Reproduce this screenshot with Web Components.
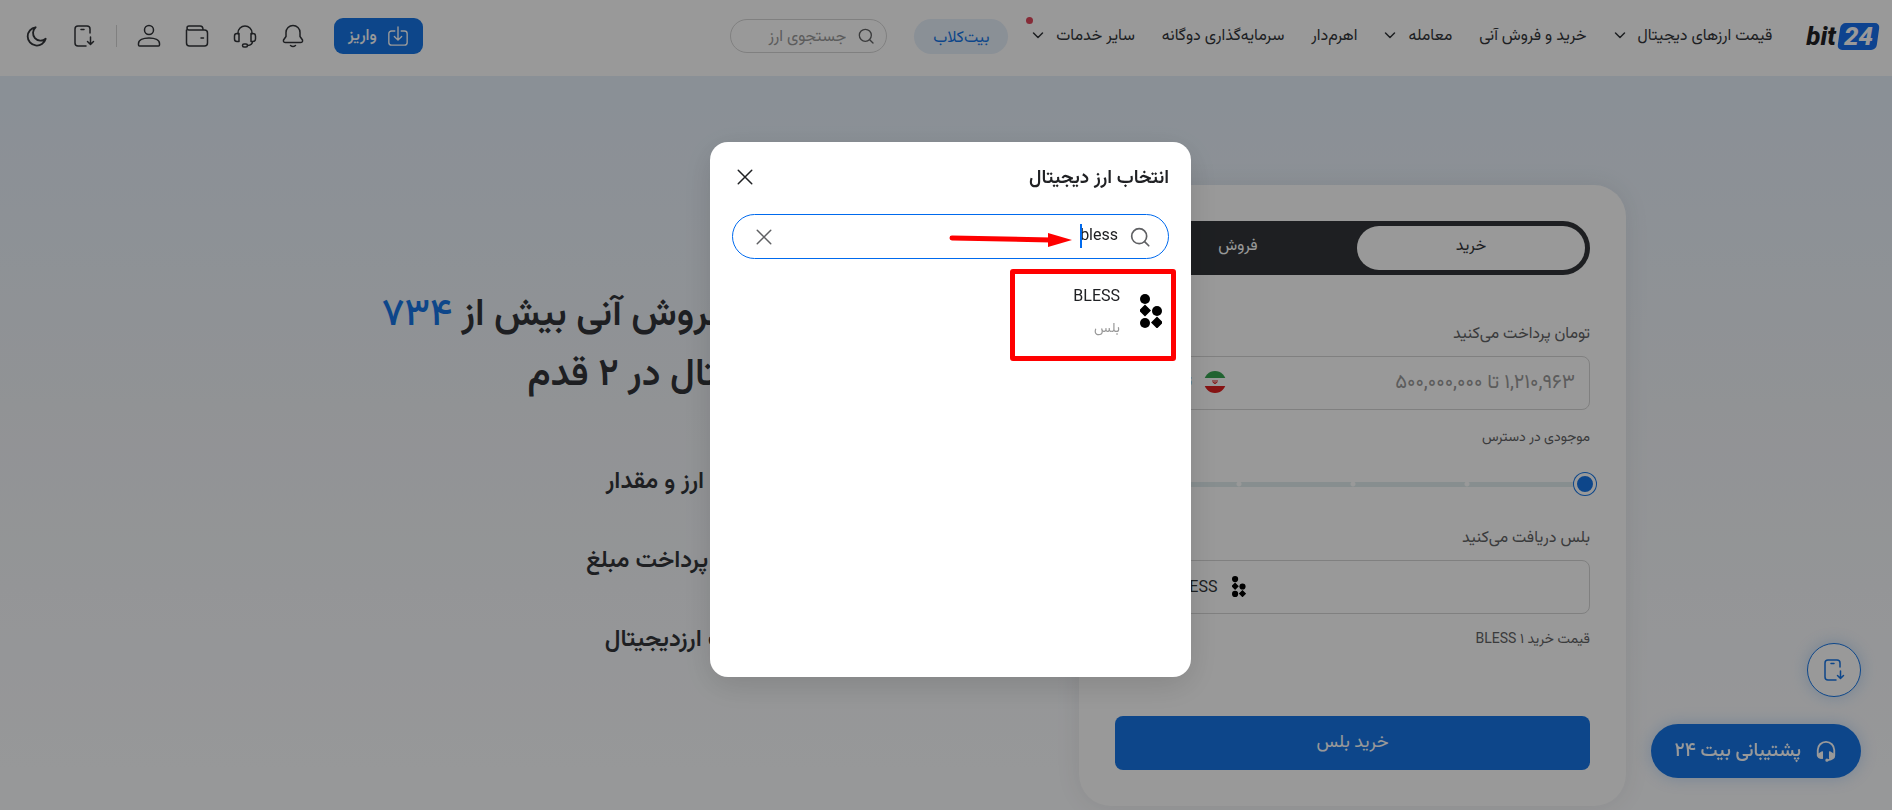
<!DOCTYPE html>
<html lang="fa" dir="rtl">
<head>
	<meta charset="utf-8">
	<meta name="viewport" content="width=device-width, initial-scale=1">
	<title>bit24</title>
	<style>
		:root {
			--blue: #1776e6;
			--ink: #323539;
			--muted: #626365;
			--line: #d6d6d6;
		}
		body {
			margin: 0;
			min-height: 100vh;
			font-family: Roboto, Vazirmatn, "DejaVu Sans", sans-serif;
			font-size: 16px;
			color: var(--ink);
			background: linear-gradient(#e6f0fb 76px, #f2f5f9 50%, #fcfdff 95%) no-repeat;
			overflow: hidden;
		}
	</style>
</head>
<body>
	<app-header></app-header>
	<buy-page></buy-page>
	<float-actions></float-actions>
	<coin-dialog heading="انتخاب ارز دیجیتال">
		<coin-option symbol="BLESS">بلس</coin-option>
	</coin-dialog>

	<script>
		const icons = {
			moon: '<path d="M21.500 15A10 10 0 1 1 10.500 2.500a8 8 0 0 0 11 12.500Z"/>',
			phone: '<path d="M18 9V5a3 3 0 0 0-3-3H6a3 3 0 0 0-3 3v14a3 3 0 0 0 3 3h8M9 5.500h3M18.500 13v7M15.500 17.500l3 3 3-3"/>',
			user: '<circle cx="12" cy="6" r="4.500"/><path d="M1.500 21v-1.500C1.500 16 6 14 12 14s10.500 2 10.500 5.500V21q0 1-1 1h-19q-1 0-1-1Z"/>',
			wallet: '<path d="M1.500 6v13a3 3 0 0 0 3 3h15a3 3 0 0 0 3-3V9a3 3 0 0 0-3-3H4a2 2 0 0 1 0-4h11q3 0 3 3.500M16 14h2.500"/>',
			headset: '<path d="M5 10V9a7 7 0 0 1 14 0v1M6 9.500H4A2.500 2.500 0 0 0 1.500 12v3A2.500 2.500 0 0 0 4 17.500h2ZM18 9.500h2a2.500 2.500 0 0 1 2.500 2.500v3a2.500 2.500 0 0 1-2.500 2.500h-2ZM19.500 17.500q0 3.500-5 4"/><rect x="9.500" y="20" width="5" height="3" rx="1.500"/>',
			bell: '<path d="M12 1.500a7 7 0 0 0-7 7v4L2.500 16Q2 18.500 4.500 18.500h15q2.500 0 2-2.500L19 12.500v-4a7 7 0 0 0-7-7ZM9.500 21.500q2.500 2 5 0"/>',
			deposit: '<path d="M8.500 6.500H5a3 3 0 0 0-3 3V19a3 3 0 0 0 3 3h14a3 3 0 0 0 3-3V9.500a3 3 0 0 0-3-3h-3.500M12 2V16M8 12.500l4 4 4-4"/>',
			search: '<circle cx="11" cy="11" r="9"/><path d="m17.500 17.500 5 5"/>',
			close: '<path d="M3 3l18 18M21 3 3 21"/>',
			chevron: '<path d="m3 8 9 9 9-9"/>',
			support: '<path d="M3 17V11a9 9 0 0 1 18 0v6q0 4-7 5" stroke-width="2"/><path d="M8 13v7q-5 0-5-4ZM16 13v7q5 0 5-4Z" fill="currentColor"/><circle cx="13" cy="22" r="1" fill="currentColor"/>'
		};

		function render(element, html) {
			const template = document.createElement('template');
			template.innerHTML = html;
			element.attachShadow({ mode: 'open' }).appendChild(template.content.cloneNode(true));
		}

		class UiIcon extends HTMLElement {
			connectedCallback() {
				const size = this.getAttribute('size') || 24;
				render(this, `
					<style>
						:host { display: inline-flex; flex: none; }
						svg { fill: none; stroke: currentColor; stroke-width: ${this.getAttribute('weight') || '1.500'}; stroke-linecap: round; stroke-linejoin: round; overflow: visible; }
					</style>
					<svg width="${size}" height="${size}" viewBox="0 0 24 24" aria-hidden="true">${icons[this.getAttribute('name')]}</svg>
				`);
			}
		}

		class BlessCoin extends HTMLElement {
			connectedCallback() {
				render(this, `
					<style>
						:host { display: inline-flex; flex: none; color: #000; }
						svg { height: var(--coin-size, 34px); fill: currentColor; }
					</style>
					<svg viewBox="0 0 22 34" aria-hidden="true">
						<circle cx="5" cy="5" r="5"/>
						<path d="m5 11 6 6-6 6-6-6ZM17 23l6 6-6 6-6-6Z" transform="translate(0 -.5)"/>
						<circle cx="17" cy="17" r="5"/>
						<circle cx="5" cy="29" r="5"/>
					</svg>
				`);
			}
		}

		class BrandLogo extends HTMLElement {
			connectedCallback() {
				render(this, `
					<style>
						:host { display: block; flex: none; }
						a { display: flex; align-items: center; direction: ltr; color: #202124; text-decoration: none; font: italic 800 26px/27px Roboto, sans-serif; }
						.badge { position: relative; z-index: 0; margin-inline-start: 2px; padding: 0 6px; color: #fff; }
						.badge::before { content: ""; position: absolute; z-index: -1; inset: 0 1px; background: #1870ef; border-radius: 5px; transform: skewX(-8deg); }
					</style>
					<a href="#"><span>bit</span><span class="badge">24</span></a>
				`);
			}
		}

		class NavItem extends HTMLElement {
			connectedCallback() {
				render(this, `
					<style>
						:host { display: block; position: relative; flex: none; }
						a { display: flex; align-items: center; gap: 12px; color: inherit; text-decoration: none; line-height: 24px; white-space: nowrap; }
						.dot { position: absolute; top: -6px; left: -6px; width: 7px; height: 7px; border-radius: 50%; background: #e0485c; }
					</style>
					<a href="#"><slot></slot>${this.hasAttribute('menu') ? '<ui-icon name="chevron" size="12" weight="3"></ui-icon>' : ''}</a>
					${this.hasAttribute('fresh') ? '<span class="dot"></span>' : ''}
				`);
			}
		}

		class AppHeader extends HTMLElement {
			connectedCallback() {
				render(this, `
					<style>
						:host { display: block; background: #fff; }
						header { display: flex; align-items: center; justify-content: space-between; box-sizing: border-box; height: 76px; padding: 0 13px 4px 26px; }
						.start, nav, .end { display: flex; align-items: center; }
						nav { gap: 27px; margin-inline: 34px 24px; padding-bottom: 2px; }
						.club { padding: 0 19px; line-height: 35px; border-radius: 18px; color: var(--blue); background: #e6f0fb; text-decoration: none; }
						.search { display: flex; align-items: center; gap: 12px; box-sizing: border-box; width: 157px; height: 34px; margin-inline-start: 27px; padding: 0 12px; border: 1px solid var(--line); border-radius: 17px; color: var(--muted); }
						input { flex: 1; min-width: 0; padding: 0 0 2px; border: 0; outline: 0; background: none; font: inherit; }
						input::placeholder { color: #999; opacity: 1; }
						button { display: inline-flex; padding: 0; border: 0; background: none; color: inherit; font: inherit; }
						.end { gap: 24px; }
						.deposit { align-items: center; gap: 10px; height: 36px; margin-inline-end: 5px; padding: 0 14px; border-radius: 9px; color: #fff; background: var(--blue); font-weight: 500; }
						hr { width: 1px; height: 22px; margin: 0 -4px; border: 0; background: var(--line); }
					</style>
					<header>
						<div class="start">
							<brand-logo></brand-logo>
							<nav>
								<nav-item menu>قیمت ارزهای دیجیتال</nav-item>
								<nav-item>خرید و فروش آنی</nav-item>
								<nav-item menu>معامله</nav-item>
								<nav-item>اهرم‌دار</nav-item>
								<nav-item>سرمایه‌گذاری دوگانه</nav-item>
								<nav-item menu fresh>سایر خدمات</nav-item>
							</nav>
							<a class="club" href="#">بیت‌کلاب</a>
							<label class="search">
								<ui-icon name="search" size="16" weight="2"></ui-icon>
								<input type="text" placeholder="جستجوی ارز" aria-label="جستجوی ارز">
							</label>
						</div>
						<div class="end">
							<button class="deposit" type="button"><ui-icon name="deposit" size="22"></ui-icon>واریز</button>
							<button type="button" aria-label="اعلان‌ها"><ui-icon name="bell"></ui-icon></button>
							<button type="button" aria-label="پشتیبانی"><ui-icon name="headset"></ui-icon></button>
							<button type="button" aria-label="کیف پول"><ui-icon name="wallet"></ui-icon></button>
							<button type="button" aria-label="حساب کاربری"><ui-icon name="user"></ui-icon></button>
							<hr>
							<button type="button" aria-label="دریافت اپلیکیشن"><ui-icon name="phone"></ui-icon></button>
							<button type="button" aria-label="حالت شب"><ui-icon name="moon" size="22" weight="2"></ui-icon></button>
						</div>
					</header>
				`);
			}
		}

		class TradeCard extends HTMLElement {
			connectedCallback() {
				render(this, `
					<style>
						:host { display: block; box-sizing: border-box; flex: none; width: 547px; padding: 36px; border-radius: 32px; background: #fff; box-shadow: 0 0 24px #32353918; }
						.tabs { display: flex; gap: 5px; padding: 5px; border-radius: 27px; background: var(--ink); }
						.tabs button { width: 228px; height: 44px; padding: 0 0 4px; border: 0; border-radius: 22px; color: #fff; background: none; font: inherit; }
						.tabs .active { color: var(--ink); background: #fff; }
						.label { display: block; color: var(--muted); line-height: 24px; }
						.pay { margin-top: 46px; }
						.field { display: flex; align-items: center; box-sizing: border-box; height: 54px; margin-top: 11px; padding: 0 14px 2px 0; border: 1px solid var(--line); border-radius: 8px; }
						.field input { flex: 1; min-width: 0; padding: 0 0 2px; border: 0; outline: 0; background: none; font: inherit; font-size: 20px; }
						.field input::placeholder { color: #999; opacity: 1; }
						.coin { display: flex; align-items: center; gap: 15px; width: 130px; padding: 0; border: 0; background: none; font: inherit; color: inherit; --coin-size: 21px; }
						.toman { gap: 12px; width: 110px; }
						.small { font-size: 14px; color: var(--muted); line-height: 24px; }
						.balance { margin-top: 14px; }
						.slider { display: block; width: calc(100% + 12px); height: 28px; margin: 22px -6px 0; padding: 0; appearance: none; background: radial-gradient(circle, #fff 2px, transparent 3px) right 72px center / 114px 8px repeat-x, linear-gradient(#e1edef, #e1edef) center / calc(100% - 12px) 5px no-repeat; }
						.slider::-webkit-slider-thumb { appearance: none; box-sizing: border-box; width: 22px; height: 22px; border: 3px solid #fff; border-radius: 50%; background: var(--blue); box-shadow: 0 0 0 1px var(--blue); }
						.receive { margin-top: 27px; }
						.price { margin-top: 12px; }
						.buy { display: block; width: 100%; height: 54px; margin-top: 66px; padding: 0; border: 0; border-radius: 8px; color: #fff; background: var(--blue); font: inherit; font-size: 18px; }
					</style>
					<div class="tabs" role="tablist">
						<button class="active" type="button" role="tab">خرید</button>
						<button type="button" role="tab">فروش</button>
					</div>
					<label class="label pay" for="pay">تومان پرداخت می‌کنید</label>
					<div class="field">
						<input id="pay" type="text" placeholder="۱,۲۱۰,۹۶۳ تا ۵۰۰,۰۰۰,۰۰۰">
						<button class="coin toman" type="button">
							<svg width="22" height="22" viewBox="0 0 22 22" aria-hidden="true">
								<clipPath id="round"><circle cx="11" cy="11" r="11"/></clipPath>
								<g clip-path="url(#round)"><path fill="#fff" d="M0 0h22v22H0z"/><path fill="#38a653" d="M0 0h22v7H0z"/><path fill="#e02020" d="M0 15h22v7H0z"/></g>
								<path d="M11 9v4M9 9q-1 3 2 3.500 3-.5 2-3.500" fill="none" stroke="#e02020"/>
							</svg>
							تومان
						</button>
					</div>
					<div class="small balance">موجودی در دسترس</div>
					<input class="slider" type="range" min="0" max="100" value="0" aria-label="موجودی در دسترس">
					<label class="label receive" for="receive">بلس دریافت می‌کنید</label>
					<div class="field">
						<input id="receive" type="text">
						<button class="coin" type="button"><bless-coin></bless-coin>BLESS</button>
					</div>
					<div class="small price">قیمت خرید ۱ BLESS</div>
					<button class="buy" type="button">خرید بلس</button>
				`);
			}
		}

		class BuyPage extends HTMLElement {
			connectedCallback() {
				render(this, `
					<style>
						:host { display: block; }
						main { display: flex; align-items: flex-start; gap: 243px; padding: 109px 266px 4px; }
						.intro { flex: 1; padding-top: 97px; }
						h1 { margin: 0; font-size: 38px; font-weight: 600; line-height: 60px; }
						b { color: var(--blue); font-weight: 500; }
						ul { margin: 64px 0 0; padding: 0 60px 0 0; list-style: none; font-size: 24px; font-weight: 600; line-height: 28px; }
						li + li { margin-top: 51px; }
					</style>
					<main>
						<trade-card></trade-card>
						<section class="intro">
							<h1>خرید و فروش آنی بیش از <b>۷۳۴</b><br>ارز دیجیتال در ۲ قدم</h1>
							<ul>
								<li>انتخاب ارز و مقدار</li>
								<li>تایید و پرداخت مبلغ</li>
								<li>دریافت ارزدیجیتال</li>
							</ul>
						</section>
					</main>
				`);
			}
		}

		class FloatActions extends HTMLElement {
			connectedCallback() {
				render(this, `
					<style>
						:host { position: fixed; right: 31px; bottom: 32px; display: flex; flex-direction: column; align-items: flex-start; gap: 27px; }
						button { display: flex; align-items: center; justify-content: center; gap: 14px; height: 54px; border-radius: 27px; font: inherit; }
						.app { width: 54px; padding: 0; border: 1px solid var(--blue); color: var(--blue); background: #fff; box-shadow: 0 0 16px #1776e640; }
						.help { padding: 0 24px; border: 0; color: #fff; background: var(--blue); font-size: 19px; font-weight: 500; box-shadow: 0 0 16px #1776e640; }
					</style>
					<button class="app" type="button" aria-label="دریافت اپلیکیشن"><ui-icon name="phone"></ui-icon></button>
					<button class="help" type="button"><ui-icon name="support" size="22"></ui-icon>پشتیبانی بیت ۲۴</button>
				`);
			}
		}

		class CoinOption extends HTMLElement {
			connectedCallback() {
				render(this, `
					<style>
						:host { display: block; }
						button { position: relative; display: flex; align-items: center; gap: 20px; width: 100%; height: 82px; padding: 0 7px 0 0; border: 0; background: none; color: #202124; font: inherit; text-align: start; }
						.names { display: flex; flex-direction: column; gap: 7px; line-height: 24px; }
						.names span { font-size: 14px; color: #999; }
						.mark { position: absolute; top: -1px; right: -7px; box-sizing: border-box; width: 166px; height: 92px; border: 5px solid #f00; border-radius: 3px; }
					</style>
					<button type="button">
						<bless-coin></bless-coin>
						<div class="names">${this.getAttribute('symbol')}<span><slot></slot></span></div>
						<div class="mark"></div>
					</button>
				`);
			}
		}

		class CoinDialog extends HTMLElement {
			connectedCallback() {
				render(this, `
					<style>
						:host { position: fixed; inset: 0; z-index: 10; display: flex; align-items: center; justify-content: center; padding: 9px 0 0 9px; background: #0006; }
						section { box-sizing: border-box; width: 481px; min-height: 535px; padding: 22px; border-radius: 18px; background: #fff; box-shadow: 0 8px 32px #0002; color: #202124; }
						header { display: flex; align-items: center; justify-content: space-between; height: 26px; padding-left: 4px; }
						h2 { margin: 0; font-size: 19px; font-weight: 600; line-height: 26px; }
						button { display: inline-flex; padding: 0; border: 0; background: none; color: inherit; }
						.search { position: relative; display: flex; align-items: center; gap: 12px; box-sizing: border-box; height: 45px; margin: 24px 0 11px; padding: 0 18px 0 22px; border: 1px solid #006aee; border-radius: 23px; color: #5f6063; }
						input { flex: 1; min-width: 0; padding: 0 0 4px; border: 0; outline: 0; background: none; color: #202124; font: inherit; }
						.caret { position: absolute; top: 9px; right: 86px; width: 2px; height: 24px; background: #006aee; }
						.arrow { position: absolute; top: 12px; right: 96px; }
					</style>
					<section role="dialog" aria-labelledby="heading">
						<header>
							<h2 id="heading">${this.getAttribute('heading')}</h2>
							<button type="button" aria-label="بستن"><ui-icon name="close" size="18" weight="2"></ui-icon></button>
						</header>
						<div class="search">
							<ui-icon name="search" size="20" weight="2"></ui-icon>
							<input type="text" value="bless" aria-label="جستجو">
							<button type="button" aria-label="پاک کردن"><ui-icon name="close" size="18" weight="2"></ui-icon></button>
							<span class="caret"></span>
							<svg class="arrow" width="123" height="22" viewBox="0 0 123 22" aria-hidden="true">
								<path d="M3 11 102 13" stroke="#f00" stroke-width="5" stroke-linecap="round"/>
								<path d="M99 6v14l24-7Z" fill="#f00"/>
							</svg>
						</div>
						<slot></slot>
					</section>
				`);
			}
		}

		customElements.define('ui-icon', UiIcon);
		customElements.define('bless-coin', BlessCoin);
		customElements.define('brand-logo', BrandLogo);
		customElements.define('nav-item', NavItem);
		customElements.define('app-header', AppHeader);
		customElements.define('trade-card', TradeCard);
		customElements.define('buy-page', BuyPage);
		customElements.define('float-actions', FloatActions);
		customElements.define('coin-option', CoinOption);
		customElements.define('coin-dialog', CoinDialog);
	</script>
</body>
</html>
